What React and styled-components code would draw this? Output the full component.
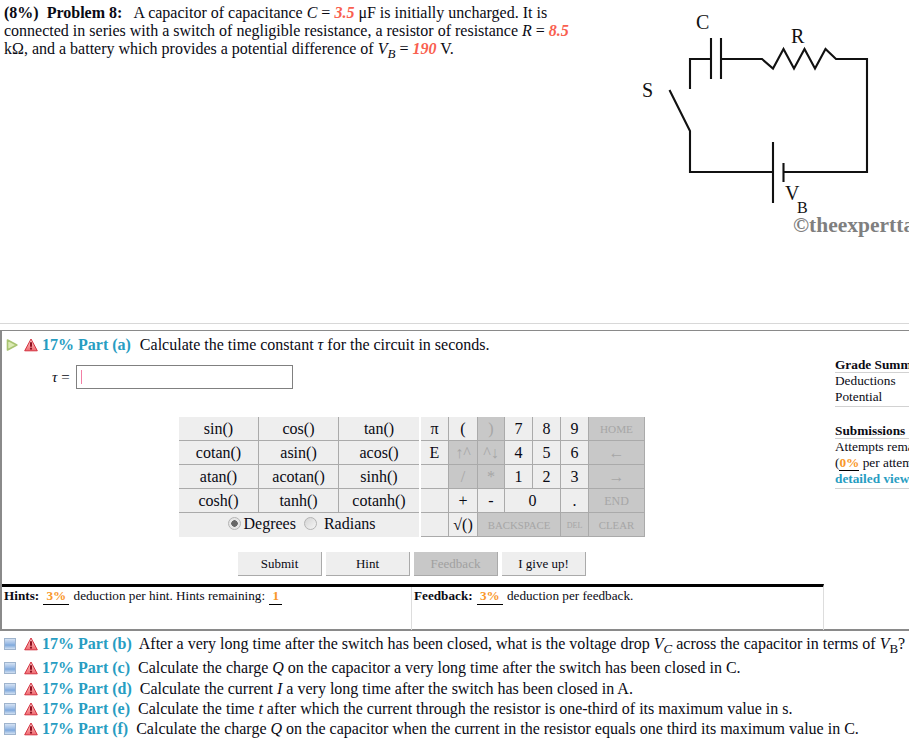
import React from "react";
import styled, { createGlobalStyle } from "styled-components";

const Global = createGlobalStyle`
  html, body { margin: 0; padding: 0; background: #fff; overflow: hidden; }
  body { font-family: "Liberation Serif", "Times New Roman", serif; font-size: 16px; color: #0a0a14; }
`;
const Page = styled.div`width: 909px; height: 740px; overflow: hidden;`;
const Header = styled.header`
  display: flex; justify-content: space-between; height: 323px;
  border-bottom: 1px solid #d8d8d8; box-sizing: content-box;
`;
const Statement = styled.p`
  margin: 4px 0 0 4px; width: 572px; line-height: 18px; font-size: 16px;
`;
const Strong = styled.b`margin-right: ${p => p.$gap || 0}px;`;
const Value = styled.b`font-style: italic; color: #f9604f;`;
const Diagram = styled.svg`display: block; width: 289px; height: 250px; flex: none; font-family: "Liberation Serif", serif;`;
const Panel = styled.section`
  display: flex; margin-top: 6px; height: 298px; border-top: 1px solid #8a8a8a; border-left: 2px solid #8a8a8a;
  border-bottom: 2px solid #8a8a8a; box-sizing: content-box;
`;
const PartRow = styled.div`
  display: flex; align-items: center; height: ${p => p.$h || 20}px; padding-left: 4px; white-space: nowrap; line-height: 20px;
`;
const PartLabel = styled.b`color: #279dc2; font-size: 16px; margin: 0 ${p => p.$gap ?? 7}px 0 4px;`;
const PartText = styled.span`white-space: pre;`;
const Sub = styled.sub`font-size: 13px; line-height: 0; vertical-align: -4px; font-style: ${p => p.$upright ? "normal" : "inherit"};`;
const Main = styled.div`width: 822px; flex: none;`;
const AnswerRow = styled.div`
  display: flex; align-items: center; height: 24px; margin: 6px 0 0 50px; gap: 3px;
`;
const AnswerLabel = styled.span`font-size: 15px; white-space: pre;`;
const AnswerInput = styled.div`
  width: 211px; height: 22px; border: 1px solid #808080; display: flex; align-items: center; padding-left: 4px; box-sizing: content-box;
`;
const Caret = styled.span`width: 1px; height: 14px; background: #f27fa5; display: block;`;
const Calc = styled.div`display: flex; margin: 28px 0 0 177px; gap: 2px;`;
const Functions = styled.div`
  display: grid; grid-template-columns: repeat(3, 80px); grid-auto-rows: 24px; background: #eee; width: 240px;
`;
const FnKey = styled.div`
  display: flex; align-items: center; justify-content: center; font-size: 16px; box-sizing: border-box;
  border-bottom: 1px solid #aaa; border-right: ${p => p.$last ? "0" : "1px solid #aaa"}; padding-top: 1px;
`;
const AngleRow = styled.div`
  grid-column: 1 / span 3; display: flex; align-items: center; justify-content: center; font-size: 16px; padding: 0 0 3px 5px;
`;
const Radio = styled.input.attrs({ type: "radio" })`
  appearance: none; width: 13px; height: 13px; margin: 0 ${p => p.$gap || 3}px 0 0; border-radius: 50%;
  border: 1px solid #b4b4b4; background: ${p => p.$on ? "radial-gradient(circle, #666 0 3px, #e6e6e6 3.5px)" : "linear-gradient(135deg, #d4d4d4, #f6f6f6)"};
`;
const RadioLabel = styled.label`margin-right: ${p => p.$gap || 0}px;`;
const Keypad = styled.div`
  display: grid; grid-template-columns: 28px 29px 27px 28px 28px 28px 56px; grid-auto-rows: 24px; width: 224px;
`;
const Key = styled.div`
  grid-column: span ${p => p.$span || 1}; display: flex; align-items: center; justify-content: center;
  box-sizing: border-box; overflow: hidden; white-space: nowrap;
  border-right: 1px solid #aaa; border-bottom: 1px solid #aaa;
  font-size: ${p => p.$size || 16}px; padding-top: 1px;
  background: ${p => p.$off ? "#c8c8c8" : "#eee"};
  color: ${p => p.$off ? "#a6a6a6" : "inherit"};
`;
const Actions = styled.div`display: flex; gap: 4px; margin: 15px 0 0 236px;`;
const ActionButton = styled.div`
  width: 84px; height: 24px; display: flex; align-items: center; justify-content: center; box-sizing: border-box; font-size: 13px;
  background: ${p => p.$off ? "#c8c8c8" : "#eee"}; color: ${p => p.$off ? "#a0a0a0" : "inherit"};
  border-right: 1px solid #aaa; border-bottom: 1px solid #aaa;
`;
const Notes = styled.div`
  display: grid; grid-template-columns: 410px 1fr; margin-top: 8px; height: 43px; border-top: 3px solid #000; border-right: 1px solid #ddd; font-size: 13.2px;
`;
const Note = styled.div`padding: 1px 0 0 2px; border-right: ${p => p.$line ? "1px solid #ddd" : "0"}; white-space: pre; line-height: 15px;`;
const Deduction = styled.b`color: #f9972a; display: inline-block; border-bottom: 1px solid #000; padding: 0 3px 1px; line-height: 14px; margin: 0 1px;`;
const Side = styled.aside`flex: none; width: 200px; margin: 26px 0 0 11px; font-size: 13.3px; line-height: 16px; white-space: nowrap;`;
const SideTitle = styled.div`font-weight: 700; height: 15px; border-bottom: 1px solid #d2d2d2;`;
const SideGroup = styled.div`margin-bottom: 16px; padding-bottom: 1px; border-bottom: 1px solid #d2d2d2;`;
const SideLine = styled.div`height: 16px;`;
const SideLink = styled.div`font-weight: 700; color: #279dc2; height: 16px;`;
const Percent = styled.b`color: #f9972a; border-bottom: 1px solid #000;`;

const WarnSvg = styled.svg`flex: none; margin-left: ${p => p.$ml}px;`;
const Warn = ({ id, ml = 8 }) => (
  <WarnSvg $ml={ml} width="14" height="14" viewBox="0 0 14 14">
    <defs>
      <linearGradient id={id} x1="0" y1="0" x2="0" y2="1">
        <stop offset="0" stopColor="#fbd0d0" />
        <stop offset="1" stopColor="#ef6a70" />
      </linearGradient>
    </defs>
    <path d="M7 1 L13.3 12.8 H.7 Z" fill={`url(#${id})`} stroke="#d3313f" strokeLinejoin="round" />
    <path d="M7 4.2V8.8" stroke="#8e1020" strokeWidth="2" />
    <circle cx="7" cy="10.7" r="1.1" fill="#8e1020" />
  </WarnSvg>
);
const IconSvg = styled.svg`flex: none;`;
const Open = () => (
  <IconSvg width="12" height="12" viewBox="0 0 12 12">
    <path d="M1.5 1 L10.8 6 L1.5 11 Z" fill="#dcebb4" stroke="#a9c472" strokeWidth="1.6" strokeLinejoin="round" />
  </IconSvg>
);
const Closed = ({ id }) => (
  <IconSvg width="12" height="12" viewBox="0 0 12 12">
    <defs>
      <linearGradient id={id} x1="0" y1="0" x2="0" y2="1">
        <stop offset="0" stopColor="#dbe6f4" />
        <stop offset=".45" stopColor="#9dbde6" />
        <stop offset=".6" stopColor="#7fa9dc" />
        <stop offset="1" stopColor="#dde8f5" />
      </linearGradient>
    </defs>
    <rect x=".5" y=".5" width="11" height="11" fill={`url(#${id})`} stroke="#9fb4cd" />
  </IconSvg>
);

const fns = ["sin()", "cos()", "tan()", "cotan()", "asin()", "acos()", "atan()", "acotan()", "sinh()", "cosh()", "tanh()", "cotanh()"];
const keys = [
  ["π"], ["("], [")", 1, 1], ["7"], ["8"], ["9"], ["HOME", 1, 1, 11.2],
  ["E"], ["↑^", 1, 1], ["^↓", 1, 1], ["4"], ["5"], ["6"], ["←", 1, 1],
  [""], ["/", 1, 1], ["*", 1, 1], ["1"], ["2"], ["3"], ["→", 1, 1],
  [""], ["+"], ["-"], ["0", 2], ["."], ["END", 1, 1, 12],
  [""], ["√()"], ["BACKSPACE", 3, 1, 10.8], ["DEL", 1, 1, 8], ["CLEAR", 1, 1, 10.8],
];
const parts = [
  [26, "(b)", 7, <>After a very long time after the switch has been closed, what is the voltage drop <i>V<Sub>C</Sub></i> across the capacitor in terms of <i>V<Sub $upright>B</Sub></i>?</>],
  [22, "(c)", 8, <>Calculate the charge <i>Q</i> on the capacitor a very long time after the switch has been closed in C.</>],
  [20, "(d)", 8, <>Calculate the current <i>I</i> a very long time after the switch has been closed in A.</>],
  [20, "(e)", 8, <>Calculate the time <i>t</i> after which the current through the resistor is one-third of its maximum value in s.</>],
  [20, "(f)", 8, <>Calculate the charge <i>Q</i> on the capacitor when the current in the resistor equals one third its maximum value in C.</>],
];

export default function App() {
  return (
    <Page>
      <Global />
      <Header>
        <Statement>
          <Strong $gap={4}>(8%)</Strong> <Strong $gap={8}>Problem 8:</Strong> A capacitor of capacitance <i>C</i> = <Value>3.5</Value> μF is initially uncharged. It is connected in series with a switch of negligible resistance, a resistor of resistance <i>R</i> = <Value>8.5</Value> kΩ, and a battery which provides a potential difference of <i>V<Sub>B</Sub></i> = <Value>190</Value> V.
        </Statement>
        <Diagram viewBox="620 0 289 250">
          <g fill="none" stroke="#111" strokeWidth="2.1">
            <path d="M690 89V59H711M711 38V79M721 38V79M721 59H762L773 68.5L783.5 49L794 68.5L804.5 49L815 68.5L825.5 49L836 59H867V172H783.5M783.5 163V182M773 142V203M773 172H690V131L669.5 90" />
          </g>
          <g fill="#111" fontSize="20">
            <text x="696" y="29">C</text>
            <text x="791" y="43">R</text>
            <text x="642" y="97">S</text>
            <text x="785" y="200">V</text>
            <text x="797" y="213" fontSize="16">B</text>
          </g>
          <text x="793" y="232" fill="#7f7f7f" fontSize="21.5" fontWeight="700">©theexperttа</text>
        </Diagram>
      </Header>
      <Panel>
        <Main>
          <PartRow $h={28}>
            <Open />
            <Warn id="warn-a" ml={6} />
            <PartLabel $gap={9}>17% Part (a)</PartLabel>
            <PartText>Calculate the time constant <i>τ</i> for the circuit in seconds.</PartText>
          </PartRow>
          <AnswerRow>
            <AnswerLabel><i>τ</i> = </AnswerLabel>
            <AnswerInput><Caret /></AnswerInput>
          </AnswerRow>
          <Calc>
            <Functions>
              {fns.map((f, i) => <FnKey key={f} $last={i % 3 === 2}>{f}</FnKey>)}
              <AngleRow>
                <Radio $on $gap={3} defaultChecked name="angle" />
                <RadioLabel $gap={8}>Degrees</RadioLabel>
                <Radio $gap={7} name="angle" />
                <RadioLabel>Radians</RadioLabel>
              </AngleRow>
            </Functions>
            <Keypad>
              {keys.map(([t, span, off, size], i) => (
                <Key key={i} $span={span} $off={!!off} $size={size}>{t}</Key>
              ))}
            </Keypad>
          </Calc>
          <Actions>
            <ActionButton>Submit</ActionButton>
            <ActionButton>Hint</ActionButton>
            <ActionButton $off>Feedback</ActionButton>
            <ActionButton>I give up!</ActionButton>
          </Actions>
          <Notes>
            <Note $line><b>Hints:</b> <Deduction>3%</Deduction> deduction per hint. Hints remaining: <Deduction>1</Deduction></Note>
            <Note><b>Feedback:</b> <Deduction>3%</Deduction> deduction per feedback.</Note>
          </Notes>
        </Main>
        <Side>
          <SideGroup>
            <SideTitle>Grade Summary</SideTitle>
            <SideLine>Deductions</SideLine>
            <SideLine>Potential</SideLine>
          </SideGroup>
          <SideGroup>
            <SideTitle>Submissions</SideTitle>
            <SideLine>Attempts remaining</SideLine>
            <SideLine>(<Percent>0%</Percent> per attempt)</SideLine>
            <SideLink>detailed view</SideLink>
          </SideGroup>
        </Side>
      </Panel>
      <div>
        {parts.map(([h, name, gap, text]) => (
          <PartRow key={name} $h={h}>
            <Closed id={`closed-${name[1]}`} />
            <Warn id={`warn-${name[1]}`} />
            <PartLabel $gap={gap}>17% Part {name}</PartLabel>
            <PartText>{text}</PartText>
          </PartRow>
        ))}
      </div>
    </Page>
  );
}
